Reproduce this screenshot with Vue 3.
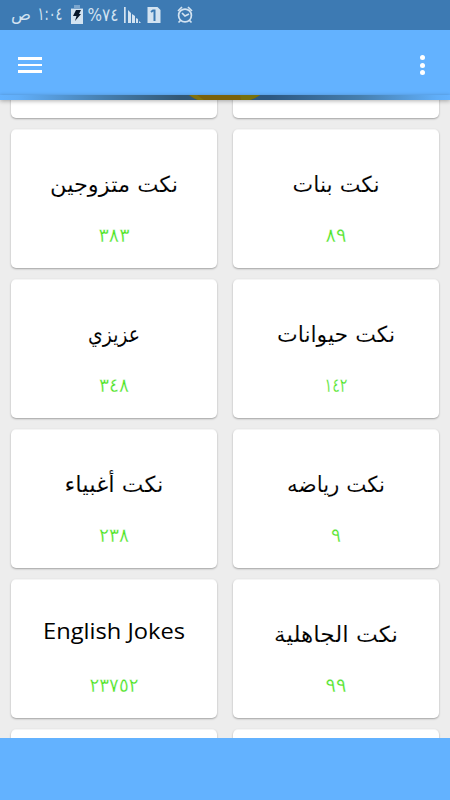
<script setup>
const cards = [
  { id: 'top-left' },
  { id: 'top-right' },
  { id: 'married', title: 'نكت متزوجين', width: 128, count: '٣٨٣', countWidth: 31 },
  { id: 'girls', title: 'نكت بنات', width: 87, count: '٨٩', countWidth: 21 },
  { id: 'azizi', title: 'عزيزي', width: 52, count: '٣٤٨', countWidth: 30 },
  { id: 'animals', title: 'نكت حيوانات', width: 118, count: '١٤٢', countWidth: 23 },
  { id: 'silly', title: 'نكت أغبياء', width: 99, count: '٢٣٨', countWidth: 30 },
  { id: 'sport', title: 'نكت رياضه', width: 98, count: '٩', countWidth: 10 },
  { id: 'english', title: 'English Jokes', width: 142, latin: true, count: '٢٣٧٥٢', countWidth: 49 },
  { id: 'jahiliya', title: 'نكت الجاهلية', width: 124, count: '٩٩', countWidth: 21 },
  { id: 'bottom-left' },
  { id: 'bottom-right' },
]
</script>

<template>
  <div class="screen">
    <header class="status">
      <svg class="status-icons" viewBox="0 0 450 30">
        <g class="ink">
          <text x="21" y="20" font-size="17" text-anchor="middle" textLength="20" lengthAdjust="spacingAndGlyphs">ص</text>
          <text x="50" y="20" font-size="18" text-anchor="middle" textLength="25" lengthAdjust="spacingAndGlyphs">١:٠٤</text>
          <text x="103" y="21" font-size="18" text-anchor="middle" textLength="31" lengthAdjust="spacingAndGlyphs">%٧٤</text>
        </g>
        <path class="faint" d="M74 5h6v3h3v5H71V8h3z" />
        <path class="fill" d="M71 9h12v15H71z" />
        <path d="M76 10h5l-2 4h2l-6 7 1.500-5H73z" fill="#08182b" />
        <path class="fill" d="M124 7h1.700v16H124zM128 10l3 3v10h-3zM132 14l3 2v7h-3zM136 18l2 1v4h-2zM139 21l2 2h-2z" />
        <path class="fill" d="M147.500 7h10l3 3v13h-13z" />
        <path d="M151 12l2-1.500h1.500V21" stroke="#3b7ab3" stroke-width="2" fill="none" />
        <g class="line">
          <circle cx="185" cy="15.500" r="6.400" />
          <path d="M182 13l3 3 4-2M178 11l4-4M188 7l4 4M180.500 20.500l-2 2M189.500 20.500l2 2" />
        </g>
      </svg>
    </header>
    <nav class="toolbar">
      <div class="menu"><i /><i /><i /></div>
      <div class="more"><i /><i /><i /></div>
    </nav>
    <div class="banner">
      <svg viewBox="0 0 450 5" class="banner-art">
        <defs>
          <linearGradient id="edge">
            <stop offset="0" stop-color="#63b2ff" />
            <stop offset=".04" stop-color="#61aef8" />
            <stop offset=".23" stop-color="#467faf" />
            <stop offset=".4" stop-color="#325774" />
            <stop offset=".6" stop-color="#2c5882" />
            <stop offset=".8" stop-color="#467fae" />
            <stop offset=".97" stop-color="#60aef8" />
            <stop offset="1" stop-color="#63b2ff" />
          </linearGradient>
        </defs>
        <path d="M0 0h450v5H0z" fill="url(#edge)" />
        <path d="M189 0h71q-4 3-10 5h-52q-5-2-9-5z" fill="#79610c" />
        <path d="M189 0h8l7 5h-6q-5-2-9-5z" fill="#80710c" />
        <path d="M240 0h20q-4 3-10 5h-9z" fill="#76700d" />
      </svg>
    </div>
    <main class="content">
      <div class="grid">
        <section v-for="card in cards" :key="card.id" class="card">
          <svg v-if="card.title" viewBox="0 0 206 139" class="label">
            <text
              class="title"
              :class="{ latin: card.latin }"
              x="103"
              :y="card.latin ? 60 : 63"
              text-anchor="middle"
              :textLength="card.width"
              lengthAdjust="spacingAndGlyphs"
            >{{ card.title }}</text>
            <text
              class="count"
              x="103"
              y="112.500"
              text-anchor="middle"
              :textLength="card.countWidth"
              lengthAdjust="spacingAndGlyphs"
            >{{ card.count }}</text>
          </svg>
        </section>
      </div>
    </main>
    <footer class="bottom" />
  </div>
</template>

<style>
body { margin: 0; }
</style>

<style scoped>
.screen {
  width: 450px;
  height: 800px;
  display: flex;
  flex-direction: column;
  overflow: hidden;
  background: #ededed;
  font-family: "DejaVu Sans", sans-serif;
}
.status { height: 30px; flex: none; background: #3d7ab3; }
.status-icons { display: block; width: 450px; height: 30px; }
.ink { fill: #d3e3f1; font-family: "DejaVu Sans", sans-serif; }
.fill { fill: #d3e3f1; }
.faint { fill: #7ba5cd; }
.line { fill: none; stroke: #d3e3f1; stroke-width: 1.7; }
.toolbar {
  height: 65px;
  flex: none;
  box-sizing: border-box;
  padding: 0 25px 0 18px;
  display: flex;
  justify-content: space-between;
  align-items: center;
  background: #63b2ff;
}
.menu { display: flex; flex-direction: column; gap: 4px; width: 24px; padding-top: 5px; }
.menu i { height: 2.500px; background: #fff; }
.more { display: flex; flex-direction: column; gap: 2.500px; padding-top: 5px; }
.more i { width: 5px; height: 5px; border-radius: 50%; background: #fff; }
.banner { height: 5px; flex: none; z-index: 1; box-shadow: 0 1px 4px rgba(0, 0, 0, .32); }
.banner-art { display: block; width: 450px; height: 5px; }
.content { flex: 1; min-height: 0; overflow: hidden; }
.grid {
  display: grid;
  grid-template-columns: 206px 206px;
  grid-auto-rows: 139px;
  gap: 11px 16px;
  margin: -121px 11px 0;
}
.card {
  border-radius: 5px;
  background: #fff;
  box-shadow: 0 1px 2px rgba(0, 0, 0, .32), inset 0 1px rgba(0, 0, 0, .04);
}
.label { display: block; width: 206px; height: 139px; }
.title { font-size: 22px; fill: #000; stroke: #fff; stroke-width: .1px; direction: rtl; }
.latin { font-family: "Open Sans", sans-serif; font-size: 22px; stroke: none; direction: ltr; }
.count { font-size: 19.500px; fill: #4be31f; stroke: #fff; stroke-width: .3px; }
.bottom { height: 62px; flex: none; background: #63b2ff; }
</style>
